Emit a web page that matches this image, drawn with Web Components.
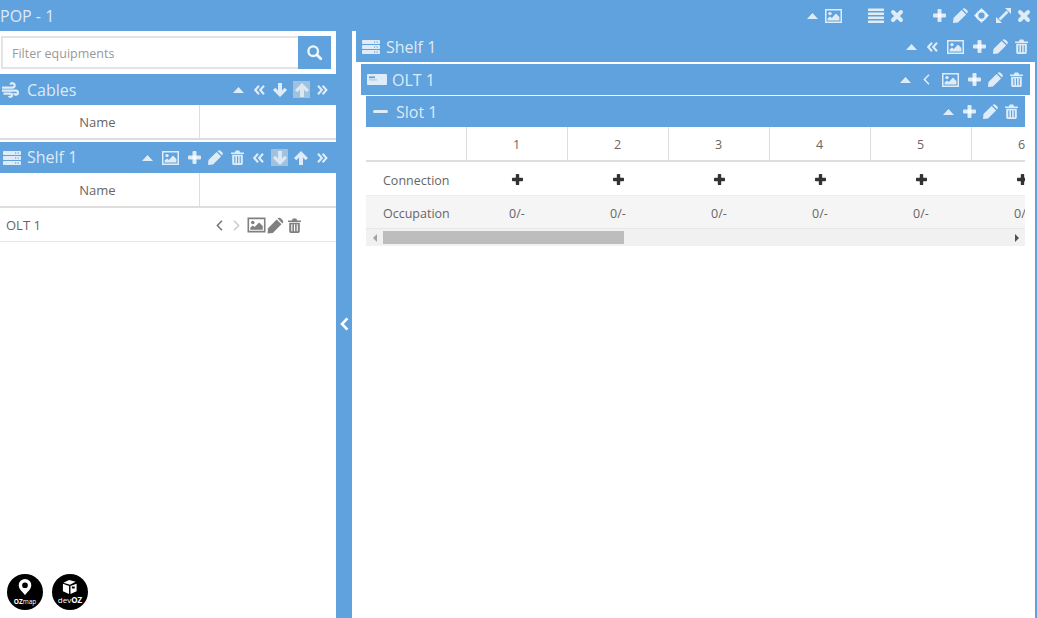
<!DOCTYPE html>
<html lang="en"><head><meta charset="utf-8"><title>POP - 1</title>
<style>html,body{margin:0;height:100%;overflow:hidden;background:#fff;font-family:"Open Sans",sans-serif}</style>
</head><body>
<x-app></x-app>
<script>
const I={
caret:[11,6,'<polygon points="5.5,0 11,6 0,6"/>'],
pic:[17,14,'<path fill-rule="evenodd" d="M0 0h17v14H0zM1.5 1.5v11h14v-11z"/><circle cx="5" cy="4.6" r="1.7"/><polygon points="2.6,11.4 2.6,9.6 5,7.4 6.8,9 11,4.6 14.4,8 14.4,11.4"/>'],
plus:[13,13,'<rect x="4.5" width="4" height="13" rx="1"/><rect y="4.5" width="13" height="4" rx="1"/>'],
pencil:[15,15,'<path d="M0 15 .5 10 8.600 1.900 13.100 6.400 5 14.500Z"/><path d="M9.500 1 10.300 .4Q11.500-.2 12.700 .9L14.100 2.300Q15.200 3.500 14.600 4.700L14 5.500Z"/>'],
trash:[13,15,'<path d="M0 2.400h3.800L4.800.4h3.400l1 2H13V4H0z"/><path fill-rule="evenodd" d="M1.200 4.800h10.600v8.800a1.400 1.400 0 0 1-1.400 1.400H2.600a1.400 1.400 0 0 1-1.400-1.400zM3.300 6.200v7h1.100v-7zM6 6.200v7h1.100v-7zM8.700 6.200v7h1.100v-7z"/>'],
x:[12,12,'<path d="M2 2 10 10M10 2 2 10" fill="none" stroke="currentColor" stroke-width="3.9" stroke-linecap="round"/>'],
list:[16,15,'<rect y=".4" width="16" height="2.5" rx=".5"/><rect y="4.4" width="16" height="2.5" rx=".5"/><rect y="8.4" width="16" height="2.5" rx=".5"/><rect y="12.4" width="16" height="2.5" rx=".5"/>'],
move:[15,15,'<circle cx="7.500" cy="7.500" r="4.300" fill="none" stroke="currentColor" stroke-width="2.400"/><polygon points="7.500,0 10.200,3 4.800,3"/><polygon points="7.500,15 10.200,12 4.800,12"/><polygon points="0,7.500 3,4.800 3,10.200"/><polygon points="15,7.500 12,4.800 12,10.200"/>'],
expand:[15,15,'<path d="M3.500 11.500 11.500 3.500" stroke="currentColor" stroke-width="2.600"/><polygon points="9,0 15,0 15,6"/><polygon points="0,9 0,15 6,15"/>'],
down:[14,14,'<path d="M7 14 14 7 11.600 4.800 9 7.400V0H5V7.400L2.400 4.800 0 7Z"/>'],
up:[14,14,'<path d="M7 0 14 7 11.600 9.200 9 6.600V14H5V6.600L2.400 9.200 0 7Z"/>'],
dbll:[11,10,'<path d="M5 .8 1.200 5 5 9.200M10 .8 6.200 5 10 9.200" fill="none" stroke="currentColor" stroke-width="2.100"/>'],
dblr:[10,10,'<path d="M1 .8 4.800 5 1 9.200M5.600 .8 9.400 5 5.600 9.200" fill="none" stroke="currentColor" stroke-width="2.100"/>'],
left:[7,11,'<path d="M6 .8 1.400 5.500 6 10.200" fill="none" stroke="currentColor" stroke-width="1.600"/>'],
right:[7,11,'<path d="M1 .8 5.600 5.500 1 10.200" fill="none" stroke="currentColor" stroke-width="1.600"/>'],
chev:[9,14,'<path d="M7.400 1.400 2 7 7.400 12.600" fill="none" stroke="currentColor" stroke-width="2.600"/>'],
search:[15,15,'<circle cx="6.200" cy="6.200" r="4.800" fill="none" stroke="currentColor" stroke-width="2.300"/><path d="M9.800 9.800 13.800 13.800" stroke="currentColor" stroke-width="2.800" stroke-linecap="round"/>'],
server:[18,14,'<rect width="18" height="4" rx=".8"/><rect y="5" width="18" height="4" rx=".8"/><rect y="10" width="18" height="4" rx=".8"/><g fill="#5fa2dd"><rect x="12" y="1.400" width="1.200" height="1.200"/><rect x="14.600" y="1.400" width="1.200" height="1.200"/><rect x="12" y="6.400" width="1.200" height="1.200"/><rect x="14.600" y="6.400" width="1.200" height="1.200"/><rect x="12" y="11.400" width="1.200" height="1.200"/><rect x="14.600" y="11.400" width="1.200" height="1.200"/></g>'],
olt:[20,11,'<rect width="20" height="11" rx="1"/><rect x="2" y="2.400" width="6" height="1.800" fill="#5fa2dd"/><rect x="2" y="5.400" width="8" height="1" fill="#9cc4e8"/>'],
minus:[15,3,'<rect width="15" height="3" rx="1.500"/>'],
wind:[17,14,'<path d="M0 4.600H10.500A2.200 2.200 0 1 0 8.400 1.600M0 7.600H14A2 2 0 1 1 12 10.200M1.500 10.600H8.500A1.600 1.600 0 1 1 7 12.800" fill="none" stroke="currentColor" stroke-width="2.200"/>']
};
function def(name,css,html){
  customElements.define(name,class extends HTMLElement{
    constructor(){super();const r=this.attachShadow({mode:'open'});
      r.innerHTML='<style>'+css(this)+'</style>'+html(this);}
  });
}
const a=(e,n,d='')=>e.getAttribute(n)??d;

def('x-icon',e=>`:host{display:inline-flex;flex:none;align-items:center;justify-content:center;margin-left:${a(e,'ml',0)}px;${e.hasAttribute('hl')?'background:rgba(205,215,225,.6);width:17px;height:17px;color:rgba(255,255,255,.62);':''}}
svg{display:block;fill:currentColor;overflow:visible}`,
e=>{const [w,h,p]=I[a(e,'n')];return `<svg width="${w}" height="${h}" viewBox="0 0 ${w} ${h}" aria-hidden="true">${p}</svg>`;});

def('x-bar',e=>`:host{display:flex;align-items:center;flex:none;height:31px;background:#5fa2dd;color:rgba(255,255,255,.8);padding-right:${a(e,'pr',7)}px}
.t{font:16px/22px "Open Sans",sans-serif;white-space:nowrap;margin-left:${a(e,'tl',6)}px;margin-right:auto;margin-bottom:${a(e,'tb',0)}px}`,
e=>`<slot name="lead"></slot><span class="t">${a(e,'label')}</span><slot></slot>`);

def('x-search',()=>`:host{display:flex;flex:none;height:33px;margin:5px 5px 5px 1px}
.f{flex:1;min-width:0;border:2px solid #e4e4e4;border-right:0;box-sizing:border-box;display:flex;align-items:center;padding:2px 0 0 9px;font:12.500px "Open Sans",sans-serif;color:#999;background:#fff}
.b{flex:none;width:33px;background:#5fa2dd;color:rgba(255,255,255,.9);display:flex;align-items:center;justify-content:center}`,
()=>`<div class="f">Filter equipments</div><div class="b"><x-icon n="search"></x-icon></div>`);

def('x-name-head',()=>`:host{display:grid;grid-template-columns:200px 1fr;flex:none;height:33px;border-bottom:2px solid #ddd;font:13px "Open Sans",sans-serif;color:#666}
div{display:flex;align-items:center;justify-content:center}
.n{border-right:1px solid #ddd;box-sizing:border-box;padding-right:4px}`,
()=>`<div class="n">Name</div><div></div>`);

def('x-row',()=>`:host{display:flex;align-items:center;flex:none;height:32px;padding:1px 35px 0 6px;border-bottom:1px solid #e6e6e6;font:13px "Open Sans",sans-serif;color:#666}
span{margin-right:auto}`,
e=>`<span>${a(e,'label')}</span><slot></slot>`);

def('x-logo',e=>`:host{display:block;width:36px;height:36px;border-radius:50%;background:#000;color:#fff;position:relative;flex:none;overflow:hidden;text-align:center}
svg{display:block;margin:5px auto 0}
.t{position:absolute;left:0;right:0;bottom:5px;font:6.500px/7px "Open Sans",sans-serif;white-space:nowrap}
b{font-weight:700}i{font-style:normal;font-weight:400}`,
e=>a(e,'k')==='map'
?`<svg width="14" height="19" viewBox="0 0 14 20"><path fill="#fff" fill-rule="evenodd" d="M7 0a6.600 6.600 0 0 1 6.600 6.600C13.600 11 9 14 7 17 5 14 .4 11 .4 6.600A6.600 6.600 0 0 1 7 0zM7 3.600a3 3 0 1 0 0 6 3 3 0 0 0 0-6z"/></svg><div class="t"><b>OZ</b><i>map</i></div>`
:`<svg width="18" height="17" viewBox="0 0 18 18"><path fill="#fff" d="M2 4 8 1l7 2-6 3zM1.500 5l6.500 2.500V16l-6.500-3zM9.500 7.500 16 5v8l-6.500 3z"/><rect x="11" y="8" width="3" height="2" fill="#000"/></svg><div class="t" style="font-size:8px;bottom:7px"><i>dev</i><b>OZ</b></div>`);

def('x-left',()=>`:host{display:flex;flex-direction:column;width:336px;flex:none;background:#fff;min-height:0}
.g{height:2px;flex:none}
.l{margin-top:auto;display:flex;gap:9px;padding:0 0 8px 7px}`,
()=>`<x-search></x-search>
<x-bar label="Cables" pr="9" tl="8"><x-icon slot="lead" n="wind" style="margin-left:2px"></x-icon>
<x-icon n="caret"></x-icon><x-icon n="dbll" ml="10"></x-icon><x-icon n="down" ml="8"></x-icon><x-icon n="up" hl ml="6"></x-icon><x-icon n="dblr" ml="7"></x-icon></x-bar>
<x-name-head></x-name-head><div class="g"></div>
<x-bar label="Shelf 1" pr="9" tl="6" tb="2"><x-icon slot="lead" n="server" style="margin-left:3px"></x-icon>
<x-icon n="caret"></x-icon><x-icon n="pic" ml="9"></x-icon><x-icon n="plus" ml="9"></x-icon><x-icon n="pencil" ml="7"></x-icon><x-icon n="trash" ml="8"></x-icon><x-icon n="dbll" ml="9"></x-icon><x-icon n="down" hl ml="7"></x-icon><x-icon n="up" ml="6"></x-icon><x-icon n="dblr" ml="9"></x-icon></x-bar>
<x-name-head></x-name-head>
<x-row label="OLT 1"><x-icon n="left" style="color:#777"></x-icon><x-icon n="right" ml="10" style="color:#ccc"></x-icon><x-icon n="pic" ml="8" style="color:#808080;transform:scale(1.06)"></x-icon><x-icon n="pencil" ml="3" style="color:#808080;transform:scale(1.06)"></x-icon><x-icon n="trash" ml="5" style="color:#808080"></x-icon></x-row>
<div class="l"><x-logo k="map"></x-logo><x-logo k="dev"></x-logo></div>`);

def('x-splitter',()=>`:host{display:flex;align-items:center;justify-content:center;width:16px;flex:none;background:#5fa2dd;color:#fff}
x-icon{transform:translateY(-1px)}`,()=>`<x-icon n="chev"></x-icon>`);

def('x-scrollbar',()=>`:host{display:flex;align-items:center;height:17px;background:#f1f1f1;flex:none;color:#505050}
.s{flex:none;width:17px;display:flex;align-items:center;justify-content:center}
.s.d{color:#a3a3a3}
.t{flex:1;display:flex;height:100%;align-items:center}
.h{width:241px;height:13px;background:#bdbdbd}
i{display:block;width:0;height:0;border:4px solid transparent}
.L{border-left:0;border-right:4px solid currentColor}.R{border-right:0;border-left:4px solid currentColor}`,
()=>`<div class="s d"><i class="L"></i></div><div class="t"><div class="h"></div></div><div class="s"><i class="R"></i></div>`);

def('x-slot-grid',()=>`:host{display:block;font:12.500px "Open Sans",sans-serif;color:#666;background:#fff}
.v{overflow:hidden}
.g{display:grid;grid-template-columns:repeat(7,101px);width:707px;grid-template-rows:35px 34px 33px}
.g>div{display:flex;align-items:center;justify-content:center;box-sizing:border-box;padding:3px 1px 0 0}
.g>.h{padding-top:1px;border-right:1px solid #ddd;border-bottom:2px solid #ddd}
.c{border-bottom:1px solid #eee}
.o{background:#f5f5f5;border-bottom:1px solid #e8e8e8}
.g>.lb{justify-content:flex-start;padding-left:17px}
.g>.p{padding-top:2px}
x-icon{color:#333}`,
()=>{const n=[1,2,3,4,5,6];return `<div class="v"><div class="g">
<div class="h"></div>${n.map(i=>`<div class="h">${i}</div>`).join('')}
<div class="c lb">Connection</div>${n.map(()=>`<div class="c p"><x-icon n="plus" style="transform:scale(.85)"></x-icon></div>`).join('')}
<div class="o lb">Occupation</div>${n.map(()=>`<div class="o">0/-</div>`).join('')}
</div></div><x-scrollbar></x-scrollbar>`;});

def('x-right',()=>`:host{display:block;flex:1;min-width:0;background:#fff;border-right:2px solid #5fa2dd;padding-left:4px;box-sizing:border-box}
.olt{margin:2px 5px 0}
.slot{margin:1px 5px 0}`,
()=>`<x-bar label="Shelf 1" tl="6"><x-icon slot="lead" n="server" style="margin-left:6px"></x-icon>
<x-icon n="caret"></x-icon><x-icon n="dbll" ml="10"></x-icon><x-icon n="pic" ml="9"></x-icon><x-icon n="plus" ml="9"></x-icon><x-icon n="pencil" ml="7"></x-icon><x-icon n="trash" ml="7"></x-icon></x-bar>
<div class="olt"><x-bar label="OLT 1" tl="5"><x-icon slot="lead" n="olt" style="margin-left:6px"></x-icon>
<x-icon n="caret"></x-icon><x-icon n="left" ml="12"></x-icon><x-icon n="pic" ml="12"></x-icon><x-icon n="plus" ml="9"></x-icon><x-icon n="pencil" ml="7"></x-icon><x-icon n="trash" ml="7"></x-icon></x-bar>
<div class="slot"><x-bar label="Slot 1" tl="8"><x-icon slot="lead" n="minus" style="margin-left:7px"></x-icon>
<x-icon n="caret"></x-icon><x-icon n="plus" ml="9"></x-icon><x-icon n="pencil" ml="7"></x-icon><x-icon n="trash" ml="7"></x-icon></x-bar>
<x-slot-grid></x-slot-grid></div></div>`);

def('x-app',()=>`:host{display:flex;flex-direction:column;width:1037px;height:618px;overflow:hidden;background:#fff}
.m{flex:1;display:flex;min-height:0}`,
()=>`<x-bar label="POP - 1" tl="0">
<x-icon n="caret"></x-icon><x-icon n="pic" ml="7"></x-icon><x-icon n="list" ml="26"></x-icon><x-icon n="x" ml="7"></x-icon><x-icon n="plus" ml="30"></x-icon><x-icon n="pencil" ml="7"></x-icon><x-icon n="move" ml="6"></x-icon><x-icon n="expand" ml="7"></x-icon><x-icon n="x" ml="7"></x-icon></x-bar>
<div class="m"><x-left></x-left><x-splitter></x-splitter><x-right></x-right></div>`);
</script>
</body></html>
